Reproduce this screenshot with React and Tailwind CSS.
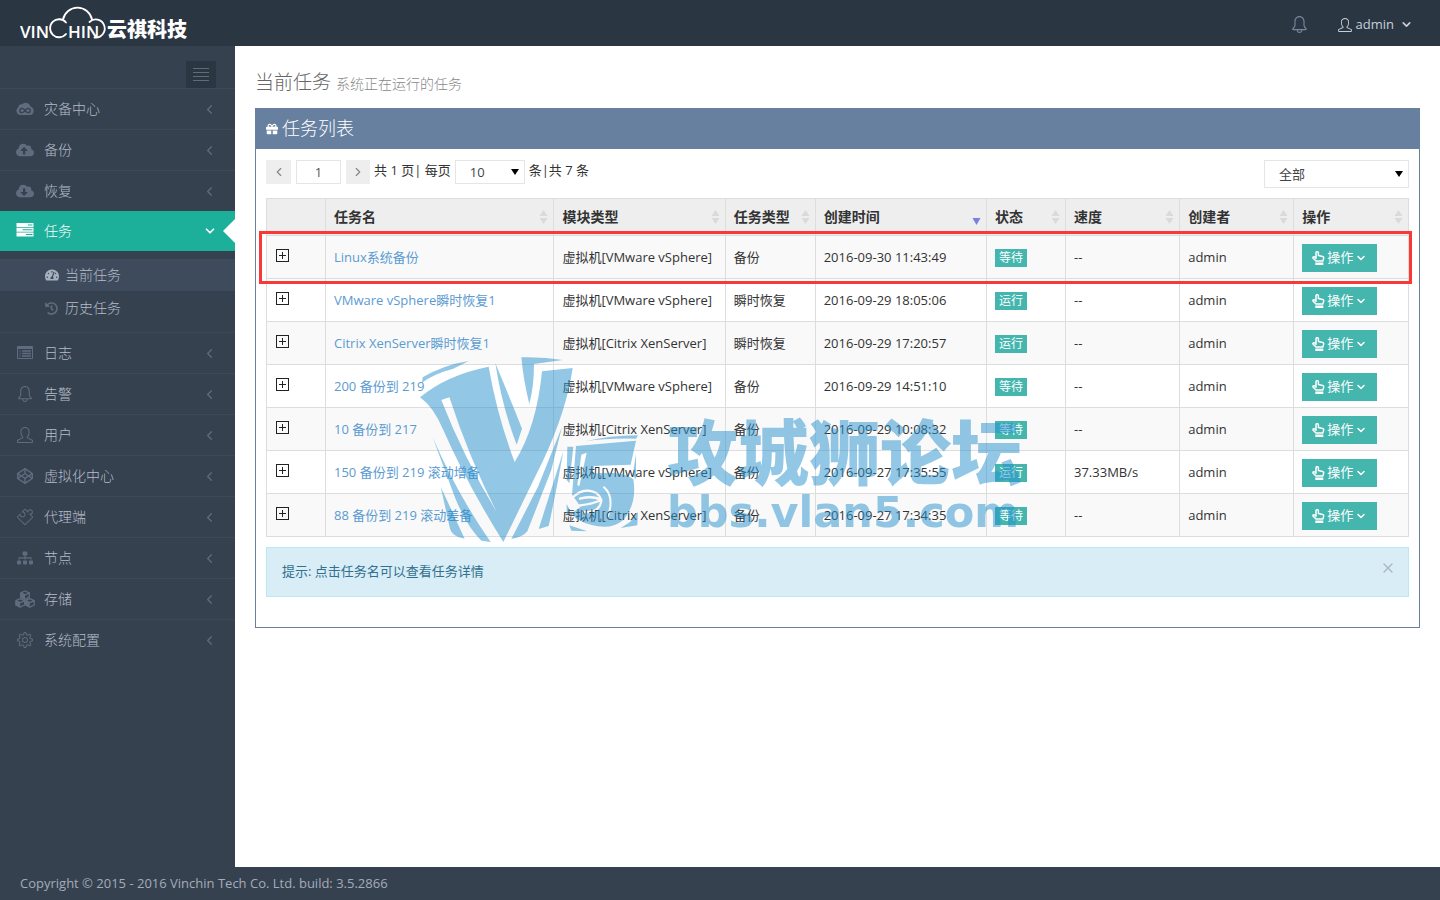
import React, { useState } from "react";
import {
  FaCloudUploadAlt,
  FaCloudDownloadAlt,
  FaTachometerAlt,
  FaHistory,
  FaCodepen,
  FaSitemap,
  FaGift,
} from "react-icons/fa";
import { SlBell, SlUser, SlPuzzle, SlSettings } from "react-icons/sl";
import { ChevronDown, ChevronLeft, ChevronRight, X } from "lucide-react";

const CloudLinkIcon = ({ size = 18 }) => (
  <svg width={size} height={size} viewBox="0 0 18 18" aria-hidden="true">
    <path
      d="M4.500 15a4.200 4.200 0 0 1-2-7.800 3 3 0 0 1 3.600-3 5 5 0 0 1 8.500 2.600A4.200 4.200 0 0 1 14 15z"
      fill="currentColor"
    />
    <path
      d="M9 10.500c-1-1.600-2-2.200-3-2.200a2.200 2.200 0 0 0 0 4.400c1.400 0 2-1 3-2.200s1.700-2.200 3-2.200a2.200 2.200 0 0 1 0 4.400c-1.200 0-2-.8-3-2.200z"
      fill="none"
      stroke="#364150"
      strokeWidth="1.300"
    />
  </svg>
);

const TasksIcon = ({ size = 18 }) => (
  <svg width={size} height={size} viewBox="0 0 18 18" aria-hidden="true">
    <path
      fillRule="evenodd"
      fill="currentColor"
      d="M.5 1h17v4H.5zM12 2.600v1h4.500v-1zM.5 5.700h17v4H.5zM6.500 7.300v1h10v-1zM.5 10.400h17v4H.5zM10 12v1h6.500v-1z"
    />
  </svg>
);

const ListIcon = ({ size = 18 }) => (
  <svg width={size} height={size} viewBox="0 0 18 18" aria-hidden="true">
    <path
      fillRule="evenodd"
      fill="currentColor"
      d="M2 2h14q1 0 1 1v11q0 1-1 1H2q-1 0-1-1V3q0-1 1-1zM2 5v9h14V5z"
    />
    <path
      d="M3.500 7h1M6 7h9M3.500 9.500h1M6 9.500h9M3.500 12h1M6 12h9"
      stroke="currentColor"
      strokeWidth="1.300"
    />
  </svg>
);

const CubesIcon = ({ size = 20 }) => (
  <svg width={size} height={size} viewBox="0 0 20 20" className="shrink-0" aria-hidden="true">
    <g fill="none" stroke="currentColor" strokeWidth="1.300" strokeLinejoin="round">
      <path d="M10 2l4.300 1.900v4.300L10 10.300 5.700 8.200V3.900zM5.700 3.900L10 5.800l4.300-1.900" />
      <path d="M5.200 9.700l4.400 2v4.300l-4.400 2.200L.8 16v-4.300zM.8 11.700l4.400 2 4.400-2" />
      <path d="M14.800 9.700l4.400 2v4.300l-4.400 2.200-4.400-2.200v-4.300zM10.400 11.700l4.400 2 4.400-2" />
    </g>
    <path
      d="M5.700 3.900L10 5.800v4.500L5.700 8.200zM.8 11.700l4.400 2v4.500L.8 16zM10.400 11.700l4.400 2v4.500l-4.400-2.200z"
      fill="currentColor"
    />
  </svg>
);

const HandIcon = () => (
  <svg width="13" height="14" viewBox="0 0 13 14" aria-hidden="true">
    <path
      d="M4 6.500V1.800a1.200 1.200 0 0 1 2.400 0v2.700l4.200.9q1.300.4 1.100 1.700l-.9 3H4L1 7q-.3-1.200 1-1.200.9 0 2 1.500z"
      fill="none"
      stroke="currentColor"
      strokeWidth="1.500"
      strokeLinejoin="round"
    />
    <path d="M3.300 11.500h8V14h-8z" fill="currentColor" />
  </svg>
);

const Logo = () => (
  <svg width="170" height="40" viewBox="0 -4 170 40" role="img" aria-label="VINCHIN 云祺科技">
    <g fill="#fff" className="font-['Open_Sans',sans-serif] font-semibold">
      <text x="0" y="31" fontSize="17">VIN</text>
      <text x="48" y="31" fontSize="17">HIN</text>
    </g>
    <g fill="none" stroke="#fff" strokeWidth="1.800" strokeLinecap="round">
      <path d="M46 15.500a9 9 0 1 0 0 11.500" />
      <path d="M43 12.500a14.800 14.800 0 0 1 29 0" />
      <path d="M69.500 15a9 9 0 1 1 6 15.500h-1" />
    </g>
    <text
      x="87"
      y="30"
      fontSize="20"
      fill="#fff"
      className="font-['Noto_Sans_CJK_SC',sans-serif] font-black"
    >
      云祺科技
    </text>
  </svg>
);

const menuTop = [
  { label: "灾备中心", icon: CloudLinkIcon, size: 18 },
  { label: "备份", icon: FaCloudUploadAlt, size: 18 },
  { label: "恢复", icon: FaCloudDownloadAlt, size: 18 },
];

const menuBottom = [
  { label: "日志", icon: ListIcon, size: 18 },
  { label: "告警", icon: SlBell, size: 16 },
  { label: "用户", icon: SlUser, size: 16 },
  { label: "虚拟化中心", icon: FaCodepen, size: 16 },
  { label: "代理端", icon: SlPuzzle, size: 16 },
  { label: "节点", icon: FaSitemap, size: 16 },
  { label: "存储", icon: CubesIcon, size: 20 },
  { label: "系统配置", icon: SlSettings, size: 16 },
];

const columns = [
  { label: "", width: "w-[59px]" },
  { label: "任务名", width: "w-[20%]" },
  { label: "模块类型", width: "w-[15%]" },
  { label: "任务类型", width: "w-[90px]" },
  { label: "创建时间", width: "w-[15%]", sorted: true },
  { label: "状态", width: "w-[79px]" },
  { label: "速度", width: "w-[10%]" },
  { label: "创建者", width: "w-[10%]" },
  { label: "操作", width: "" },
];

const tasks = [
  { name: "Linux系统备份", module: "虚拟机[VMware vSphere]", type: "备份", time: "2016-09-30 11:43:49", status: "等待", speed: "--" },
  { name: "VMware vSphere瞬时恢复1", module: "虚拟机[VMware vSphere]", type: "瞬时恢复", time: "2016-09-29 18:05:06", status: "运行", speed: "--" },
  { name: "Citrix XenServer瞬时恢复1", module: "虚拟机[Citrix XenServer]", type: "瞬时恢复", time: "2016-09-29 17:20:57", status: "运行", speed: "--" },
  { name: "200 备份到 219", module: "虚拟机[VMware vSphere]", type: "备份", time: "2016-09-29 14:51:10", status: "等待", speed: "--" },
  { name: "10 备份到 217", module: "虚拟机[Citrix XenServer]", type: "备份", time: "2016-09-29 10:08:32", status: "等待", speed: "--" },
  { name: "150 备份到 219 滚动增备", module: "虚拟机[VMware vSphere]", type: "备份", time: "2016-09-27 17:35:55", status: "运行", speed: "37.33MB/s" },
  { name: "88 备份到 219 滚动差备", module: "虚拟机[Citrix XenServer]", type: "备份", time: "2016-09-27 17:34:35", status: "等待", speed: "--" },
];

const MenuItem = ({ label, icon: Icon, size }) => (
  <li className="border-t border-[#3d4957]">
    <a href="#" className="flex h-10 items-center pl-4 pr-[18px] text-sm font-light text-[#b4bcc8]">
      <span className="flex w-[18px] shrink-0 justify-center text-[#606c7d]">
        <Icon size={size} />
      </span>
      <span className="ml-[10px] flex-1">{label}</span>
      <ChevronLeft size={15} className="text-[#606c7d]" />
    </a>
  </li>
);

const SortIcon = ({ sorted }) => (
  <svg width="9" height="16" viewBox="0 0 9 16" className="shrink-0" aria-hidden="true">
    {sorted ? (
      <path d="M0.500 9h8L4.500 16z" fill="#7c7fe0" />
    ) : (
      <path d="M0.500 7h8L4.500 1zM0.500 9h8L4.500 15z" fill="#dadada" />
    )}
  </svg>
);

const Cell = ({ children }) => (
  <td className="border border-[#ddd] px-2 pt-[2px]">{children}</td>
);

const Watermark = () => (
  <div
    aria-hidden="true"
    className="pointer-events-none absolute left-[175px] top-[304px] flex text-[#2791cf] opacity-50"
  >
    <svg width="240" height="200" viewBox="0 0 720 600" fill="currentColor">
      <mask id="cuts">
        <path d="M0 0h720v600H0z" fill="#fff" />
        <path d="M94 150L118 142Q180 330 260 486Q160 320 94 150z" fill="#000" />
        <path d="M514 314L530 308 508 408 502 406z" fill="#000" />
        <g fill="none" stroke="#000" strokeLinecap="round">
          <path d="M484 446Q510 420 534 422Q566 424 574 450M574 450Q550 436 510 446M574 450Q548 462 510 466M574 450Q570 490 520 486" strokeWidth="7" />
          <path d="M582 412Q614 440 594 498" strokeWidth="6" />
        </g>
      </mask>
      <g mask="url(#cuts)">
        <path d="M30 142Q110 75 236 50Q262 200 314 336Q380 230 396 64L488 54Q470 180 400 330L280 576Q170 400 100 240 70 170 30 142z" />
        <path d="M256 40Q290 120 336 236L320 284Q276 170 256 40z" />
        <path d="M36 98L38 82Q100 45 176 33L130 56Q70 72 36 98z" />
        <path d="M334 22Q400 20 458 30L372 42Q372 110 358 162Q340 90 334 22z" />
        <path d="M68 262Q140 430 242 576L214 572Q170 530 134 440z" />
        <path d="M92 410L164 566Q126 560 120 536z" />
        <path d="M456 230L424 360 352 544Q338 562 304 567L384 410z" />
        <path d="M460 304Q440 420 416 528L386 537z" />
        <path d="M472 290h18l-12 110-8-10z" />
        <path d="M526 274Q600 256 684 256L678 266Q590 264 526 274z" />
        <path d="M498 288L678 272 662 344 552 348 546 372Q640 360 670 388Q682 460 640 510Q590 552 500 508L486 490 512 470 486 434z" />
        <path d="M470 462L480 480 470 500zM478 526L532 544 484 542zM678 312V388L668 376zM684 486L682 526 632 534 660 516z" />
      </g>
    </svg>
    <div className="ml-[17px] mt-[60px]">
      <div className="font-['Noto_Sans_CJK_SC',sans-serif] text-[71px] font-black leading-[76px]">
        攻城狮论坛
      </div>
      <div className="font-['DejaVu_Sans',sans-serif] text-[43px] font-bold leading-[52px]">
        bbs.vlan5.com
      </div>
    </div>
  </div>
);

const App = () => {
  const [page, setPage] = useState("1");
  const [pageSize, setPageSize] = useState("10");
  const [filter, setFilter] = useState("all");
  const [showTip, setShowTip] = useState(true);

  return (
    <div className="flex min-h-screen flex-col bg-[#364150] font-['Open_Sans','Noto_Sans_CJK_SC',sans-serif] text-[13px] text-[#333]">
      {/* Top bar */}
      <header className="flex h-[46px] items-center bg-[#2b3643] pl-5 pr-[27px]">
        <a href="#">
          <Logo />
        </a>
        <div className="ml-auto flex items-center pt-[3px]">
          <button type="button" aria-label="通知" className="text-[#79869a]">
            <SlBell size={17} />
          </button>
          <button type="button" className="ml-[30px] flex items-center text-[#c6cfda]">
            <SlUser size={14} />
            <span className="ml-1">admin</span>
            <ChevronDown size={13} className="ml-[6px]" strokeWidth={3} />
          </button>
        </div>
      </header>

      <div className="flex flex-1">
        {/* Sidebar */}
        <nav className="w-[235px] shrink-0">
          <div className="flex h-[42px] items-end justify-end pr-[19px]">
            <button
              type="button"
              aria-label="菜单"
              className="flex h-[27px] w-[30px] flex-col items-center justify-center gap-[3px] bg-[#2b3643]"
            >
              <span className="h-px w-4 bg-[#606c7d]" />
              <span className="h-px w-4 bg-[#606c7d]" />
              <span className="h-px w-4 bg-[#606c7d]" />
              <span className="h-px w-4 bg-[#606c7d]" />
            </button>
          </div>
          <ul>
            {menuTop.map((item) => (
              <MenuItem key={item.label} {...item} />
            ))}
            <li>
              <a
                href="#"
                className="relative flex h-10 items-center bg-[#1caf9a] pl-4 pr-[18px] text-sm font-light text-white"
              >
                <TasksIcon />
                <span className="ml-[10px] flex-1">任务</span>
                <ChevronDown size={14} strokeWidth={3} />
                <span className="absolute right-0 top-2 border-y-[12px] border-r-[12px] border-y-transparent border-r-white" />
              </a>
              <ul className="flex flex-col gap-px py-2 text-sm font-light text-[#b4bcc8]">
                <li>
                  <a href="#" className="flex h-8 items-center bg-[#3e4b5c] pl-[45px]">
                    <FaTachometerAlt size={14} className="text-[#a7b0bd]" />
                    <span className="ml-[6px]">当前任务</span>
                  </a>
                </li>
                <li>
                  <a href="#" className="flex h-8 items-center pl-[45px]">
                    <FaHistory size={13} className="text-[#606c7d]" />
                    <span className="ml-[7px]">历史任务</span>
                  </a>
                </li>
              </ul>
            </li>
            {menuBottom.map((item) => (
              <MenuItem key={item.label} {...item} />
            ))}
          </ul>
        </nav>

        {/* Content */}
        <main className="relative min-w-0 flex-1 bg-white px-5 pb-5 pt-[21px]">
          <h1 className="pb-[11px] text-[19px] font-light leading-[30px] text-[#666]">
            当前任务 <small className="text-sm text-[#888]">系统正在运行的任务</small>
          </h1>

          <section className="border border-[#67809f] bg-white">
            <h2 className="flex h-10 items-center bg-[#67809f] pb-[2px] pl-[10px] text-[18px] font-light text-white">
              <FaGift size={12} className="mt-[2px]" />
              <span className="ml-1">任务列表</span>
            </h2>

            <div className="px-[10px] pb-[30px] pt-[11px]">
              {/* Pager and filter */}
              <div className="mb-[10px] flex h-7 items-start">
                <button
                  type="button"
                  aria-label="上一页"
                  className="flex h-6 w-[25px] items-center justify-center bg-[#eee] text-[#888]"
                >
                  <ChevronLeft size={14} />
                </button>
                <input
                  type="text"
                  aria-label="页码"
                  value={page}
                  onChange={(e) => setPage(e.target.value)}
                  className="ml-[5px] h-6 w-[45px] border border-[#e5e5e5] text-center text-[#555]"
                />
                <button
                  type="button"
                  aria-label="下一页"
                  className="ml-[5px] flex h-6 w-6 items-center justify-center bg-[#eee] text-[#888]"
                >
                  <ChevronRight size={14} />
                </button>
                <span className="ml-1 leading-5">共 1 页| 每页</span>
                <div className="relative mx-1">
                  <select
                    aria-label="每页条数"
                    value={pageSize}
                    onChange={(e) => setPageSize(e.target.value)}
                    className="h-6 w-[70px] appearance-none border border-[#e5e5e5] bg-white pl-[14px] pt-[2px] text-[#444]"
                  >
                    <option value="10">10</option>
                    <option value="20">20</option>
                    <option value="50">50</option>
                  </select>
                  <span className="pointer-events-none absolute right-[6px] top-[9px] border-x-[4px] border-t-[6px] border-x-transparent border-t-black" />
                </div>
                <span className="leading-5">条|共 7 条</span>
                <div className="relative ml-auto">
                  <select
                    aria-label="任务筛选"
                    value={filter}
                    onChange={(e) => setFilter(e.target.value)}
                    className="h-7 w-[145px] appearance-none border border-[#e5e5e5] bg-white pl-[14px] pt-[2px] text-[#444]"
                  >
                    <option value="all">全部</option>
                    <option value="waiting">等待</option>
                    <option value="running">运行</option>
                  </select>
                  <span className="pointer-events-none absolute right-[6px] top-[11px] border-x-[4px] border-t-[6px] border-x-transparent border-t-black" />
                </div>
              </div>

              {/* Task table */}
              <div className="relative">
                <table className="w-full table-fixed border-collapse border border-[#ddd]">
                  <thead>
                    <tr className="h-[37px] bg-[#eee]">
                      {columns.map((col, i) => (
                        <th
                          key={i}
                          className={`border border-[#ddd] pl-2 pr-[5px] text-left text-sm font-bold ${col.width}`}
                        >
                          {col.label && (
                            <div className="flex items-center justify-between">
                              {col.label}
                              <SortIcon sorted={col.sorted} />
                            </div>
                          )}
                        </th>
                      ))}
                    </tr>
                  </thead>
                  <tbody>
                    {tasks.map((task) => (
                      <tr key={task.name} className="h-[43px] whitespace-nowrap odd:bg-[#f9f9f9]">
                        <td className="border border-[#ddd] pl-[9px]">
                          <button
                            type="button"
                            aria-label="展开"
                            className="mb-1 flex h-[13px] w-[13px] items-center justify-center border border-[#222]"
                          >
                            <svg width="7" height="7" viewBox="0 0 7 7" aria-hidden="true">
                              <path d="M0 3h7v1H0zM3 0h1v7H3z" fill="#222" />
                            </svg>
                          </button>
                        </td>
                        <Cell>
                          <a href="#" className="text-[#5b9bd1]">{task.name}</a>
                        </Cell>
                        <Cell>{task.module}</Cell>
                        <Cell>{task.type}</Cell>
                        <Cell>{task.time}</Cell>
                        <Cell>
                          <span className="block h-[18px] w-8 bg-[#44b6ae] px-1 text-[12px] leading-[18px] text-white">
                            {task.status}
                          </span>
                        </Cell>
                        <Cell>{task.speed}</Cell>
                        <Cell>admin</Cell>
                        <Cell>
                          <button
                            type="button"
                            className="flex h-7 w-[75px] items-center justify-center bg-[#44b6ae] text-white"
                          >
                            <HandIcon />
                            <span className="ml-[2px]">操作</span>
                            <ChevronDown size={12} strokeWidth={3} className="ml-[2px]" />
                          </button>
                        </Cell>
                      </tr>
                    ))}
                  </tbody>
                </table>
                {/* Highlight around the first task */}
                <div className="pointer-events-none absolute -left-[7px] -right-[3px] top-[33px] h-[53px] border-[3px] border-[#fb3838]" />
              </div>

              {showTip && (
                <div className="mt-[10px] flex h-[50px] items-center justify-between border border-[#bce8f1] bg-[#d9edf7] pl-[15px] pr-[12px] text-[#31708f]">
                  <span>提示: 点击任务名可以查看任务详情</span>
                  <button
                    type="button"
                    aria-label="关闭"
                    onClick={() => setShowTip(false)}
                    className="mb-2 text-[#a9bac4]"
                  >
                    <X size={16} />
                  </button>
                </div>
              )}
            </div>
          </section>

          <Watermark />
        </main>
      </div>

      <footer className="flex h-[33px] items-center px-5 text-[13px] text-[#a3acb8]">
        Copyright © 2015 - 2016 Vinchin Tech Co. Ltd. build: 3.5.2866
      </footer>
    </div>
  );
};

export default App;
